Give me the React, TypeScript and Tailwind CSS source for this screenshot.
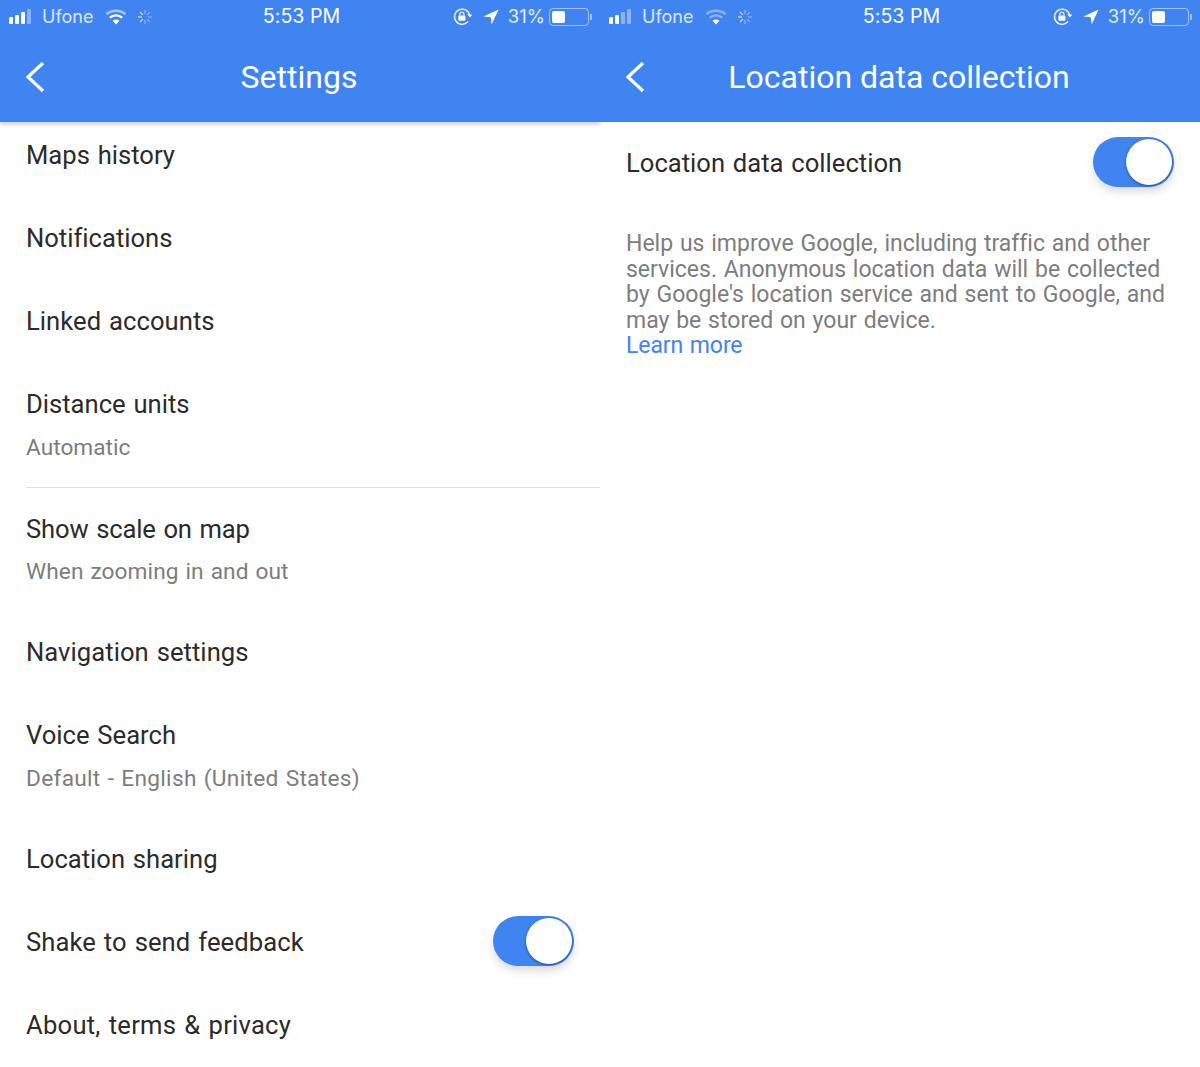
function SignalBars({ strong }: { strong: number }) {
  const heights = ["h-[7px]", "h-[9px]", "h-[12px]", "h-[15px]"];
  return (
    <div className="flex items-end gap-[2px]">
      {heights.map((h, i) => (
        <div
          key={i}
          className={`w-[4px] rounded-[1px] ${h} ${i < strong ? "bg-white" : "bg-white/40"}`}
        />
      ))}
    </div>
  );
}

function WifiIcon({ dim }: { dim?: boolean }) {
  return (
    <svg width="22" height="16" viewBox="0 0 22 16" fill="none">
      <path d="M1.5 5.2C6.8 .6 15.2 .6 20.5 5.2" stroke="#fff" strokeOpacity={dim ? 0.4 : 0.55} strokeWidth="2.4" />
      <path d="M4.8 8.6C8.3 5.6 13.7 5.6 17.2 8.6" stroke="#fff" strokeOpacity={dim ? 0.4 : 1} strokeWidth="2.4" />
      <path d="M11 15.5 7.6 11.8C9.5 10.2 12.5 10.2 14.4 11.8Z" fill="#fff" />
    </svg>
  );
}

function Spinner() {
  const angles = [0, 45, 90, 135, 180, 225, 270, 315];
  return (
    <svg width="16" height="16" viewBox="0 0 16 16">
      {angles.map((a) => (
        <line
          key={a}
          x1="8"
          y1="1"
          x2="8"
          y2="5"
          stroke="#fff"
          strokeWidth="1.4"
          transform={`rotate(${a} 8 8)`}
          opacity={a > 180 ? 0.7 : 0.35}
        />
      ))}
    </svg>
  );
}

function RotationLock() {
  return (
    <svg width="20" height="18" viewBox="0 0 20 18" fill="none">
      <path d="M16.6 7.2A7.6 7.6 0 1 0 15 13.6" stroke="#fff" strokeWidth="1.4" />
      <path d="M14.4 6.4h5l-2.5 3.2Z" fill="#fff" />
      <rect x="5.4" y="7.4" width="7" height="5.4" rx="1" fill="#fff" />
      <path d="M6.9 7.6V6a2 2 0 0 1 4 0v1.6" stroke="#fff" strokeWidth="1.2" />
    </svg>
  );
}

function LocationArrow() {
  return (
    <svg width="16" height="16" viewBox="0 0 16 16">
      <path d="M15.6 .4 .4 7.4l7.4 .8 .8 7.4Z" fill="#fff" />
    </svg>
  );
}

function Battery() {
  return (
    <div className="flex items-center gap-[1px]">
      <div className="flex h-[18px] w-[40px] items-center rounded-[4px] border border-white/50 p-[2px]">
        <div className="h-full w-[13px] rounded-[2px] bg-white" />
      </div>
      <div className="h-[6px] w-[2px] rounded-r-[1px] bg-white/50" />
    </div>
  );
}

function StatusBar({ strong, dimWifi }: { strong: number; dimWifi?: boolean }) {
  return (
    <div className="grid h-[32px] grid-cols-3 items-center pl-[9px] pr-[8px] pt-[1px] font-['Inter',sans-serif] text-white">
      <div className="flex items-center">
        <SignalBars strong={strong} />
        <span className="ml-[11px] text-[18px] text-white/80">Ufone</span>
        <span className="ml-[12px] flex"><WifiIcon dim={dimWifi} /></span>
        <span className="ml-[10px] flex"><Spinner /></span>
      </div>
      <div className="pl-[2px] pt-[1px] text-center text-[19.6px]">5:53 PM</div>
      <div className="flex items-center justify-end">
        <RotationLock />
        <span className="ml-[10px] flex"><LocationArrow /></span>
        <span className="ml-[9px] text-[18.5px] text-white/85">31%</span>
        <span className="ml-[4px] flex"><Battery /></span>
      </div>
    </div>
  );
}

function BackChevron() {
  return (
    <svg width="20" height="32" viewBox="0 0 20 32" fill="none" className="absolute left-[25px] top-[29px]">
      <path d="M18 2 3 16l15 14" stroke="#fff" strokeWidth="3.2" />
    </svg>
  );
}

function Header({ title, strong, dimWifi, shadow }: { title: string; strong: number; dimWifi?: boolean; shadow?: boolean }) {
  return (
    <div className={`relative z-10 h-[122px] bg-[#4084f2] ${shadow ? "shadow-[0_2px_5px_rgba(0,0,0,0.22)]" : ""}`}>
      <StatusBar strong={strong} dimWifi={dimWifi} />
      <div className="relative flex h-[90px] items-center justify-center text-white">
        <BackChevron />
        <span className="pr-[2px] text-[32px]">{title}</span>
      </div>
    </div>
  );
}

function Toggle() {
  return (
    <div className="flex h-[50px] w-[81px] justify-end rounded-full bg-[#4084f2] p-[2px] shadow-[0_5px_9px_rgba(0,0,0,0.14)]">
      <div className="h-[46px] w-[46px] rounded-full bg-white shadow-[0_1px_3px_rgba(0,0,0,0.45)]" />
    </div>
  );
}

type RowProps = {
  title: string;
  sub?: string;
  heightClass: string;
  paddingClass?: string;
  titleClass?: string;
  subClass?: string;
  toggle?: boolean;
};

function Row({ title, sub, heightClass, paddingClass = "pt-[25px]", titleClass = "", subClass = "mt-[11.5px]", toggle }: RowProps) {
  return (
    <div className={`flex justify-between pl-[26px] pr-[26px] ${heightClass} ${paddingClass}`}>
      <div>
        <div className={`h-[32px] text-[25.6px] leading-[32px] text-[#2b2b2b] [word-spacing:1.5px] ${titleClass}`}>{title}</div>
        {sub && <div className={`h-[32px] text-[22.7px] leading-[32px] text-[#7d7d7d] [word-spacing:1.2px] ${subClass}`}>{sub}</div>}
      </div>
      {toggle && <div className="-mt-[10px]"><Toggle /></div>}
    </div>
  );
}

export default function App() {
  return (
    <div className="flex h-[1067px] w-[1200px] overflow-hidden bg-white font-['Roboto',sans-serif] [font-variant-ligatures:none]">
      <div className="w-[600px]">
        <Header title="Settings" strong={3} shadow />
        <Row title="Maps history" heightClass="h-[75px]" paddingClass="pt-[17px]" />
        <Row title="Notifications" heightClass="h-[83px]" />
        <Row title="Linked accounts" heightClass="h-[83px]" titleClass="tracking-[0.05px]" />
        <Row title="Distance units" sub="Automatic" heightClass="h-[124px]" />
        <div className="ml-[26px] h-px bg-[#e0e0e0]" />
        <Row
          title="Show scale on map"
          sub="When zooming in and out"
          heightClass="h-[123px]"
          titleClass="tracking-[-0.16px]"
          subClass="mt-[11px] tracking-[0.08px]"
        />
        <Row title="Navigation settings" heightClass="h-[83px]" titleClass="tracking-[0.05px]" />
        <Row
          title="Voice Search"
          sub="Default - English (United States)"
          heightClass="h-[124px]"
          subClass="mt-[11.5px] tracking-[0.28px]"
        />
        <Row title="Location sharing" heightClass="h-[83px]" />
        <Row title="Shake to send feedback" heightClass="h-[83px]" titleClass="tracking-[0.08px]" toggle />
        <Row title="About, terms & privacy" heightClass="h-[83px]" titleClass="tracking-[0.24px]" />
      </div>
      <div className="w-[600px]">
        <Header title="Location data collection" strong={2} dimWifi />
        <div className="flex items-center justify-between pl-[26px] pr-[26px] pt-[15px]">
          <span className="pt-[2px] text-[25.6px] text-[#2b2b2b] [word-spacing:1.5px]">Location data collection</span>
          <Toggle />
        </div>
        <div className="mt-[44px] pl-[26px] pr-[26px] text-[23px] leading-[25.6px] text-[#7d7d7d] [word-spacing:1.1px]">
          <p>
            Help us improve Google, including traffic and other services. Anonymous location data will be collected by
            Google's location service and sent to Google, and may be stored on your device.
          </p>
          <p className="text-[#4084f2] tracking-[-0.1px]">Learn more</p>
        </div>
      </div>
    </div>
  );
}
